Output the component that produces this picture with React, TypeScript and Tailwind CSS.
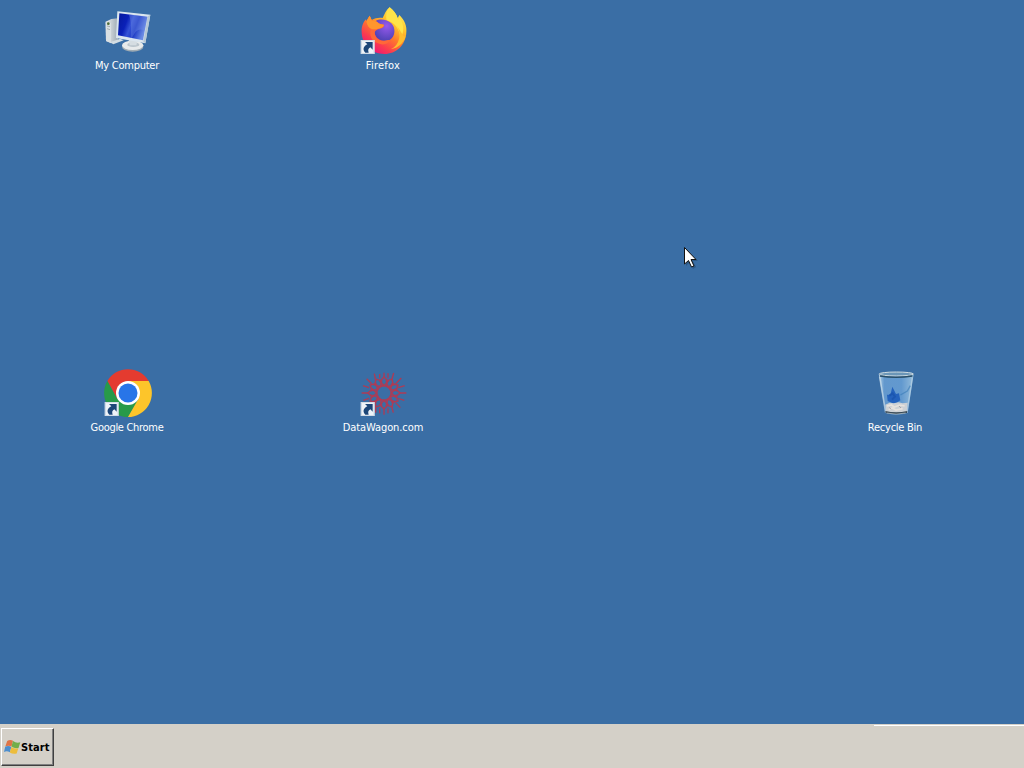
import type { ReactNode } from 'react';

function ShortcutArrow({ x, y }: { x: number; y: number }) {
  return (
    <g transform={`translate(${x} ${y})`}>
      <rect width="42" height="42" fill="#eef3f8" />
      <rect x="2" y="2" width="38" height="38" fill="none" stroke="#c3cfdd" strokeWidth="2" />
      <path d="M13 6H36V29L29 22C23 25 21 30 24 38H14C5 29 8 19 20 13Z" fill="#1c4678" />
    </g>
  );
}

function ComputerIcon() {
  return (
    <svg viewBox="42 21 144 144" className="size-12">
      <defs>
        <linearGradient id="screen" x1="0" y1="0" x2="1" y2="0.35">
          <stop offset="0" stopColor="#071a9c" />
          <stop offset="0.35" stopColor="#0a20b8" />
          <stop offset="0.52" stopColor="#3553d6" />
          <stop offset="0.7" stopColor="#1a37c4" />
          <stop offset="1" stopColor="#6a8be4" />
        </linearGradient>
        <linearGradient id="tower" x1="0" y1="0" x2="1" y2="0">
          <stop offset="0" stopColor="#eceeee" />
          <stop offset="1" stopColor="#9eaab4" />
        </linearGradient>
      </defs>
      <path d="M47 65L64 57L84 55V119L66 130L48 123Z" fill="url(#tower)" />
      <path d="M47 65L63 69V130L48 123Z" fill="#d9dfe2" />
      <path d="M51 78L60 80M51 86L60 89" stroke="#8b9799" strokeWidth="2" />
      <circle cx="55" cy="71" r="4" fill="#4c6b35" />
      <path d="M60 127L90 116L101 121L70 133Z" fill="#d3dce2" />
      <ellipse cx="128" cy="140" rx="32" ry="15" fill="#9fabb3" />
      <ellipse cx="128" cy="136" rx="32" ry="14" fill="#e7eaeb" />
      <ellipse cx="130" cy="134" rx="18" ry="7" fill="#bac5cc" />
      <path d="M116 118L142 124L139 136H119Z" fill="#d5dde2" />
      <path d="M82 34L181 44L166 130L78 114Z" fill="#dbe6ef" />
      <path d="M181 44L166 130L160 125L173 49Z" fill="#b6c8d6" />
      <path d="M88 40L172 50L159 121L84 106Z" fill="url(#screen)" />
      <path d="M116 43L172 50L164 92C147 84 137 91 126 114L122 113C124 83 124 62 116 43Z" fill="#7795e8" opacity=".35" />
    </svg>
  );
}

function FirefoxIcon() {
  return (
    <svg viewBox="30 21 144 144" className="size-12">
      <defs>
        <linearGradient id="flame" x1="0.85" y1="0.05" x2="0.25" y2="0.95">
          <stop offset="0" stopColor="#fff05a" />
          <stop offset="0.3" stopColor="#ffc42d" />
          <stop offset="0.55" stopColor="#ff7b2b" />
          <stop offset="0.8" stopColor="#fb3b50" />
          <stop offset="1" stopColor="#ef1676" />
        </linearGradient>
        <radialGradient id="globe" cx=".6" cy=".3" r=".7">
          <stop offset="0" stopColor="#9759ec" />
          <stop offset="1" stopColor="#5043b6" />
        </radialGradient>
      </defs>
      <path d="M119 22C132 32 140 43 143 55L148 45C164 60 171 79 169 96C167 136 139 162 103 162C65 162 36 134 35 97C34 79 40 66 48 58L49 64L59 47L65 60C75 54 88 52 98 54C103 44 108 30 119 22Z" fill="url(#flame)" />
      <path d="M119 22C132 34 143 47 144 60L149 53C163 72 163 99 151 115C149 84 133 68 110 61C107 48 109 32 119 22Z" fill="#ffe449" />
      <path d="M139 76C156 99 150 136 122 148C147 144 166 125 169 99C166 125 157 99 139 76Z" fill="#ffbd2d" />
      <path d="M77 63C91 55 112 59 124 70C138 84 136 110 120 119C105 127 83 122 76 106C71 94 75 84 85 82L98 75L87 70Z" fill="url(#globe)" />
      <path d="M49 64L59 47L66 62C75 62 83 65 87 72L102 74C103 81 96 85 88 86C80 89 74 92 74 98C75 114 87 123 101 122C108 122 114 119 122 120C115 132 99 137 84 130C63 122 57 105 63 87C57 85 51 75 49 64Z" fill="#ff6838" />
      <path d="M59 47L66 62C75 62 83 65 87 72L102 74C101 81 93 85 84 86C76 88 66 89 59 84C53 79 50 71 49 64Z" fill="#ff962d" />
      <ShortcutArrow x={32} y={120} />
    </svg>
  );
}

function ChromeIcon() {
  return (
    <svg viewBox="54 21 144 144" className="size-12">
      <path d="M64 57A72 72 0 0 1 188 57H126L94 112Z" fill="#e43b2f" />
      <path d="M64 57A72 72 0 0 0 126 165L158 111L94 111Z" fill="#289a49" />
      <path d="M188 57A72 72 0 0 1 126 165L157 111L126 57Z" fill="#fdc52a" />
      <circle cx="126" cy="93" r="36" fill="#fff" />
      <circle cx="126" cy="93" r="28.5" fill="#2875e8" />
      <ShortcutArrow x={56} y={120} />
    </svg>
  );
}

const rays = [0, 30, 60, 90, 120, 150, 180, 210, 240, 270, 300, 330];

function DataWagonIcon() {
  return (
    <svg viewBox="60 21 144 144" className="size-12">
      <g fill="none" stroke="#c03449" strokeWidth="4.5" opacity=".85">
        <circle cx="132" cy="93" r="22" strokeWidth="5" />
        {rays.map((angle) => (
          <path key={angle} transform={`rotate(${angle} 132 93)`} d="M132 71L120 58L132 45L144 58Z" />
        ))}
        <path d="M132 47V32M119 48V36M144 48V34M107 54L103 35M155 54L161 33M95 65L80 50M167 65L184 48M87 77L69 71M175 77L194 71M84 93H65M178 93H199M87 109L70 115M175 109L193 115M95 122L82 135M167 122L181 137M107 133V152M155 133L160 152M119 139V154M144 139V154M132 141V158" strokeWidth="4" />
      </g>
      <ShortcutArrow x={62} y={120} />
    </svg>
  );
}

function RecycleBinIcon() {
  return (
    <svg viewBox="36 21 144 144" className="size-12">
      <defs>
        <linearGradient id="glass" x1="0" y1="0" x2="1" y2="0">
          <stop offset="0" stopColor="#b2d0e7" />
          <stop offset=".16" stopColor="#6398cd" />
          <stop offset=".65" stopColor="#6299cf" />
          <stop offset="1" stopColor="#96bddb" />
        </linearGradient>
      </defs>
      <path d="M56 35L161 37L143 153Q109 162 76 153Z" fill="url(#glass)" />
      <path d="M59 44L77 151" stroke="#d6e5ed" strokeWidth="5" opacity=".6" />
      <path d="M157 47L141 151" stroke="#c6dce9" strokeWidth="4" opacity=".55" />
      <ellipse cx="109" cy="37" rx="52" ry="8" fill="#315e89" />
      <ellipse cx="109" cy="36" rx="51" ry="6" fill="#6b96b8" stroke="#d1dde2" strokeWidth="3" />
      <path d="M60 42Q108 50 157 42" fill="none" stroke="#284e69" strokeWidth="4" />
      <path d="M83 117L81 98L91 99L97 74L108 96L117 94L121 115L104 126Z" fill="#2462bd" />
      <path d="M88 101L98 94L105 104L96 113" fill="none" stroke="#1c57b1" strokeWidth="6" />
      <path d="M151 71L142 87L121 99" fill="none" stroke="#397bb7" strokeWidth="4" opacity=".6" />
      <path d="M76 128L89 122L101 124L116 121L128 124L143 122L140 150Q108 156 78 150Z" fill="#cdd1d5" />
      <path d="M81 132L94 129L103 135L119 129L134 132M86 143L97 138L108 144L128 140" fill="none" stroke="#e7e2dd" strokeWidth="5" />
      <path d="M88 136L93 142M117 132L123 138" stroke="#aaa5a7" strokeWidth="3" />
      <path d="M76 147Q108 155 142 147L141 153Q108 160 77 153Z" fill="#374955" />
      <path d="M80 153Q108 160 137 153" stroke="#bfcbd2" strokeWidth="2" fill="none" />
    </svg>
  );
}

function DesktopIcon({ label, tracking, children }: { label: string; tracking: string; children: ReactNode }) {
  return (
    <div className="flex w-32 flex-col items-center">
      {children}
      <span className={`mr-0.5 mt-1 whitespace-nowrap text-[11px] leading-[14px] text-white ${tracking}`}>{label}</span>
    </div>
  );
}

function StartFlag() {
  return (
    <svg viewBox="0 0 17 16" className="h-4 w-[17px] shrink-0">
      <path d="M3.2 2Q6 0 9 1.7L7.5 7.4Q4.5 6 1.3 7.5Z" fill="#df7446" />
      <path d="M9 2Q12.5 4.5 16.3 3.2L14.5 9Q11 10 7.5 7.6Z" fill="#72ae4a" />
      <path d="M1.2 7.8Q4.5 6.2 7.3 8L5.8 13.3Q3 11.5 0 13Z" fill="#4d8ecd" />
      <path d="M7.4 8Q11 10.2 14.3 9.2L12.7 14.5Q9 15.5 5.8 13.5Z" fill="#edbd3c" />
    </svg>
  );
}

export default function App() {
  return (
    <main className="flex h-screen w-screen flex-col overflow-hidden bg-[#3a6ea5] font-['DejaVu_Sans_Condensed','DejaVu_Sans',sans-serif]">
      <section className="relative min-h-0 flex-1">
        <div className="absolute left-16 top-[7px]"><DesktopIcon label="My Computer" tracking="tracking-[-0.25px]"><ComputerIcon /></DesktopIcon></div>
        <div className="absolute left-80 top-[7px]"><DesktopIcon label="Firefox" tracking="tracking-[0.25px]"><FirefoxIcon /></DesktopIcon></div>
        <div className="absolute left-16 top-[369px]"><DesktopIcon label="Google Chrome" tracking="tracking-[-0.3px]"><ChromeIcon /></DesktopIcon></div>
        <div className="absolute left-80 top-[369px]"><DesktopIcon label="DataWagon.com" tracking="tracking-[-0.1px]"><DataWagonIcon /></DesktopIcon></div>
        <div className="absolute left-[832px] top-[369px]"><DesktopIcon label="Recycle Bin" tracking="tracking-[-0.25px]"><RecycleBinIcon /></DesktopIcon></div>
        <svg viewBox="0 0 14 23" className="absolute left-[684px] top-[247px] h-[23px] w-3.5">
          <path d="M2 2V19L6 15L9 22L12 20L9 14H14Z" fill="#183858" opacity=".4" />
          <path d="M.5 .5V17L4.5 13.5L7.5 20L10 19L7 12.5H12Z" fill="#fff" stroke="#111" strokeWidth="1" />
        </svg>
      </section>
      <footer className="flex h-11 shrink-0 flex-col border-t border-[#d4d0c8] bg-[#d4d0c8]">
        <div className="ml-[874px] h-px bg-white" />
        <div className="flex flex-1 pl-px pt-0.5">
          <button className="flex h-[38px] w-[53px] items-center border border-b-[#404040] border-l-white border-r-[#404040] border-t-white bg-[#d4d0c8] pl-0.5 shadow-[inset_-1px_-1px_0_#808080]">
            <StartFlag />
            <span className="whitespace-nowrap pt-0.5 text-[11px] font-bold leading-4 tracking-[0.1px] text-black">Start</span>
          </button>
        </div>
      </footer>
    </main>
  );
}
